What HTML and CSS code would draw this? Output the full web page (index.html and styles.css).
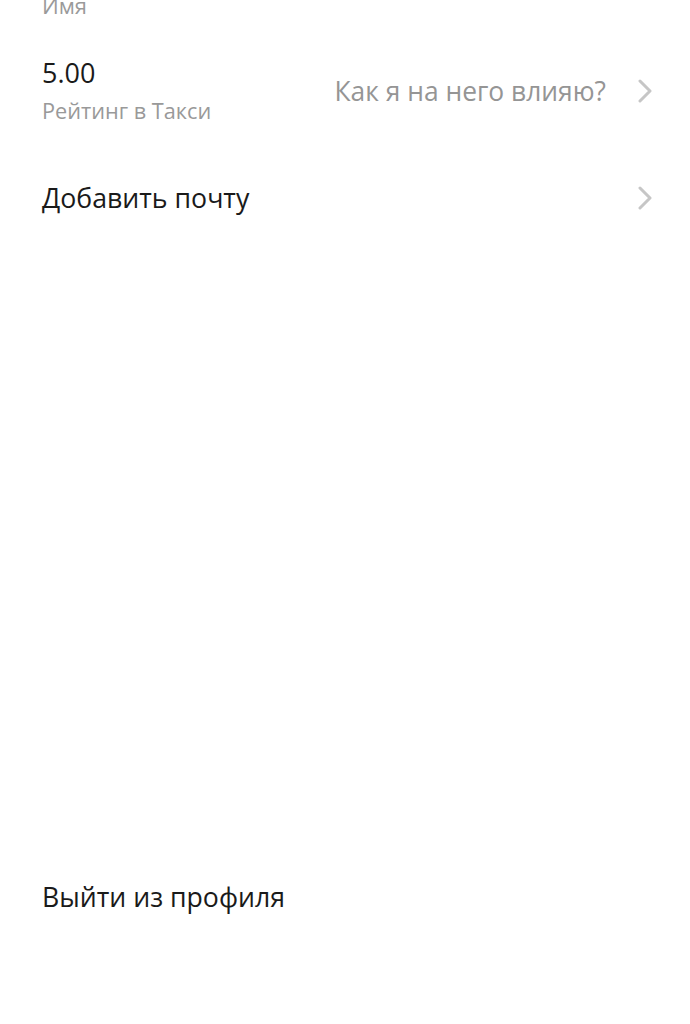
FILE: index.html
```html
<!DOCTYPE html>
<html lang="ru">
<head>
<meta charset="utf-8">
<link rel="stylesheet" href="styles.css">
</head>
<body>
<div class="screen">
  <div class="name-label">Имя</div>
  <div class="row rating-row">
    <div class="rating">
      <div class="rating-value">5.00</div>
      <div class="rating-label">Рейтинг в Такси</div>
    </div>
    <div class="row-action">
      <span class="action-text">Как я на него влияю?</span>
      <svg class="chevron" viewBox="0 0 16 24" width="16" height="24"><path d="M3 2 L13 12 L3 22" fill="none" stroke="#c6c6c6" stroke-width="3" stroke-linecap="round" stroke-linejoin="round"/></svg>
    </div>
  </div>
  <div class="row email-row">
    <span class="row-title">Добавить почту</span>
    <svg class="chevron" viewBox="0 0 16 24" width="16" height="24"><path d="M3 2 L13 12 L3 22" fill="none" stroke="#c6c6c6" stroke-width="3" stroke-linecap="round" stroke-linejoin="round"/></svg>
  </div>
  <div class="spacer"></div>
  <div class="logout">Выйти из профиля</div>
</div>
</body>
</html>
```
FILE: styles.css
```css
html, body {
  margin: 0;
  padding: 0;
  background: #ffffff;
}
body {
  font-family: "Open Sans", "Noto Sans", sans-serif;
  color: #1a1a1a;
  overflow: hidden;
}
.screen {
  height: 1024px;
  display: flex;
  flex-direction: column;
  padding: 0 37px 0 42px;
  box-sizing: border-box;
}
.name-label {
  font-size: 22px;
  line-height: 28px;
  color: #9a9a9a;
  margin-top: -9px;
}
.row {
  display: flex;
  align-items: center;
  justify-content: space-between;
}
.rating-row {
  margin-top: 36px;
}
.rating-value {
  font-size: 27px;
  line-height: 36px;
  color: #1a1a1a;
}
.rating-label {
  font-size: 21.7px;
  line-height: 30px;
  color: #999999;
  margin-top: 5px;
}
.row-action {
  display: flex;
  align-items: center;
  gap: 31px;
}
.action-text {
  font-size: 26.4px;
  color: #959595;
}
.chevron {
  display: block;
}
.email-row {
  margin-top: 54px;
}
.row-title {
  font-size: 26.7px;
  line-height: 36px;
}
.spacer {
  flex: 1;
}
.logout {
  font-size: 26.7px;
  line-height: 36px;
  margin-bottom: 109px;
}
```
